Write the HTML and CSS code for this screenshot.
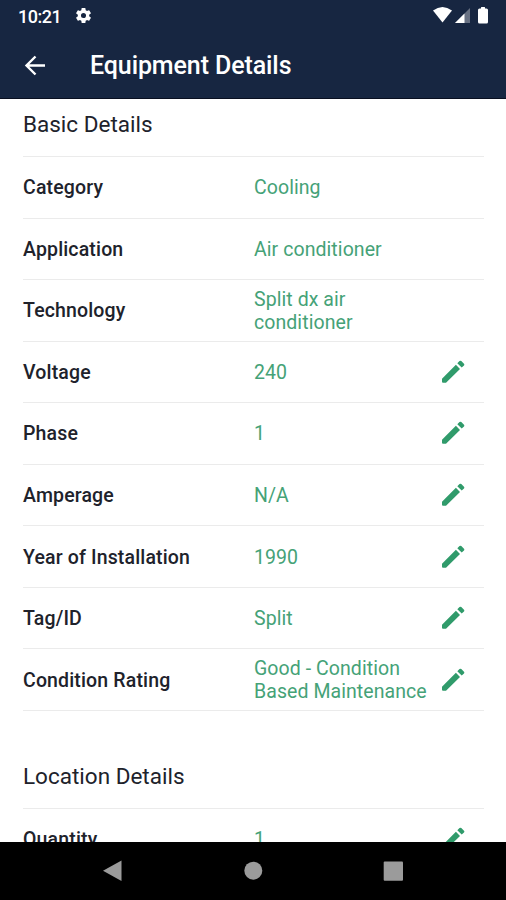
FILE: index.html
```html
<!DOCTYPE html>
<html lang="en">
<head>
<meta charset="utf-8">
<title>Equipment Details</title>
<link rel="stylesheet" href="styles.css">
</head>
<body>
<svg class="defs" width="0" height="0" aria-hidden="true">
<symbol id="pencil" viewBox="0 0 30 30"><path d="M4 21.800v3q0 1 1 1h3L22 11.900 17.900 7.700zM19.300 6.200l2.200-2.200q.9-.7 1.800 0l2.700 2.700q.8.9 0 1.800l-2.300 2.100z"/></symbol>
</svg>
<div class="screen">
<header class="top">
<div class="status">
<span class="clock">10:21</span>
<svg class="gear" viewBox="0 0 24 24"><path d="M19.14 12.94c.04-.3.06-.61.06-.94s-.02-.64-.07-.94l2.03-1.58a.49.49 0 0 0 .12-.61l-1.92-3.32a.49.49 0 0 0-.59-.22l-2.39.96a7 7 0 0 0-1.62-.94l-.36-2.54A.48.48 0 0 0 13.92 2.400h-3.84a.48.48 0 0 0-.47.41l-.36 2.540c-.59.24-1.130.57-1.620.94l-2.390-.96a.49.49 0 0 0-.59.22L2.740 8.870a.48.48 0 0 0 .12.61l2.030 1.580a7 7 0 0 0 0 1.880l-2.030 1.580a.49.49 0 0 0-.12.61l1.920 3.320c.12.22.37.29.59.22l2.390-.96c.5.38 1.030.7 1.620.94l.36 2.540c.05.24.24.41.47.41h3.840c.24 0 .44-.17.47-.41l.36-2.540a7 7 0 0 0 1.620-.94l2.390.96c.22.08.47 0 .59-.22l1.920-3.320a.48.48 0 0 0-.12-.61zM12 15.200a3.200 3.200 0 1 1 0-6.400 3.200 3.200 0 0 1 0 6.400z"/></svg>
<svg class="signals" viewBox="0 0 60 20"><path d="M1 5.500Q10.500-1.500 20 5.500L10.500 17.500z"/><path class="dim" d="M38 3v15H23z"/><path d="M32.500 8.500V18H23z"/><path d="M47.500 3.500H49V2.500q0-.5.500-.5h3q.5 0 .5.500v1h1.500q1.500 0 1.500 1.500v12q0 1.500-1.500 1.500h-7q-1.500 0-1.500-1.500V5q0-1.500 1.500-1.500z"/></svg>
</div>
<div class="bar">
<svg class="back" viewBox="0 0 27 27"><path d="M23 13.500H5M13.500 4.500l-9 9 9 9"/></svg>
<h1>Equipment Details</h1>
</div>
</header>
<main>
<section>
<h2>Basic Details</h2>
<dl>
<div class="row"><dt>Category</dt><dd>Cooling</dd></div>
<div class="row"><dt>Application</dt><dd>Air conditioner</dd></div>
<div class="row"><dt>Technology</dt><dd>Split dx air<br>conditioner</dd></div>
<div class="row"><dt>Voltage</dt><dd>240</dd><svg class="edit"><use href="#pencil"/></svg></div>
<div class="row"><dt>Phase</dt><dd>1</dd><svg class="edit"><use href="#pencil"/></svg></div>
<div class="row"><dt>Amperage</dt><dd>N/A</dd><svg class="edit"><use href="#pencil"/></svg></div>
<div class="row"><dt>Year of Installation</dt><dd>1990</dd><svg class="edit"><use href="#pencil"/></svg></div>
<div class="row"><dt>Tag/ID</dt><dd>Split</dd><svg class="edit"><use href="#pencil"/></svg></div>
<div class="row"><dt>Condition Rating</dt><dd>Good - Condition<br>Based Maintenance</dd><svg class="edit"><use href="#pencil"/></svg></div>
</dl>
</section>
<section class="location">
<h2>Location Details</h2>
<dl>
<div class="row"><dt>Quantity</dt><dd>1</dd><svg class="edit"><use href="#pencil"/></svg></div>
</dl>
</section>
</main>
<nav>
<svg viewBox="0 0 24 24"><path d="M20.500 1.500v20.500L2 11.700z"/></svg>
<svg viewBox="0 0 24 24"><circle cx="12.300" cy="11.700" r="9"/></svg>
<svg viewBox="0 0 24 24"><rect x="2.700" y="2.500" width="19.300" height="19.300" rx="1"/></svg>
</nav>
</div>
</body>
</html>
```
FILE: styles.css
```css
* { box-sizing: border-box; }
body { margin: 0; font-family: Roboto, "Liberation Sans", sans-serif; background: #fff; }
.defs { display: none; }
.screen { height: 900px; display: flex; flex-direction: column; overflow: hidden; }
.top { height: 99px; flex: none; background: #172641; border-bottom: 1px solid #090f20; color: #fff; fill: #fff; }
.status { height: 32px; display: flex; align-items: center; padding: 0 14px 0 18px; }
.clock { font-size: 18px; font-weight: 500; letter-spacing: -.5px; }
.gear { width: 19px; height: 19px; margin: -1px 0 0 13px; }
.signals { width: 60px; height: 20px; margin: -2px 0 0 auto; }
.dim { opacity: .35; }
.bar { height: 66px; display: flex; align-items: center; padding-left: 22px; }
.back { width: 27px; height: 27px; fill: none; stroke: #fff; stroke-width: 2.4; }
h1 { margin: 2px 0 0 41px; font-size: 25px; font-weight: 500; line-height: 30px; letter-spacing: -.1px; }
main { flex: 1; min-height: 0; overflow: hidden; padding: 0 22px 0 23px; }
h2 { height: 58px; margin: 0; padding-top: 12px; border-bottom: 1px solid #ebebeb; font-size: 22.5px; font-weight: 400; line-height: 27px; color: #20222b; }
dl { margin: 0; }
.row { height: 61.55px; display: grid; grid-template-columns: 231px 188px 24px; align-items: center; border-bottom: 1px solid #ebebeb; }
dt { padding-top: 1px; font-size: 19.5px; font-weight: 500; letter-spacing: .15px; color: #20222b; }
dd { margin: 0; padding-top: 1px; font-size: 19.5px; font-weight: 400; line-height: 23px; letter-spacing: .07px; color: #45a277; white-space: nowrap; }
.edit { width: 30px; height: 30px; margin-left: -4px; fill: #309b6b; }
.location { margin-top: 40px; }
nav { height: 58px; flex: none; background: #000; display: flex; justify-content: space-between; align-items: center; padding: 0 101px; }
nav svg { width: 24px; height: 24px; fill: #9b9b9b; }
```
